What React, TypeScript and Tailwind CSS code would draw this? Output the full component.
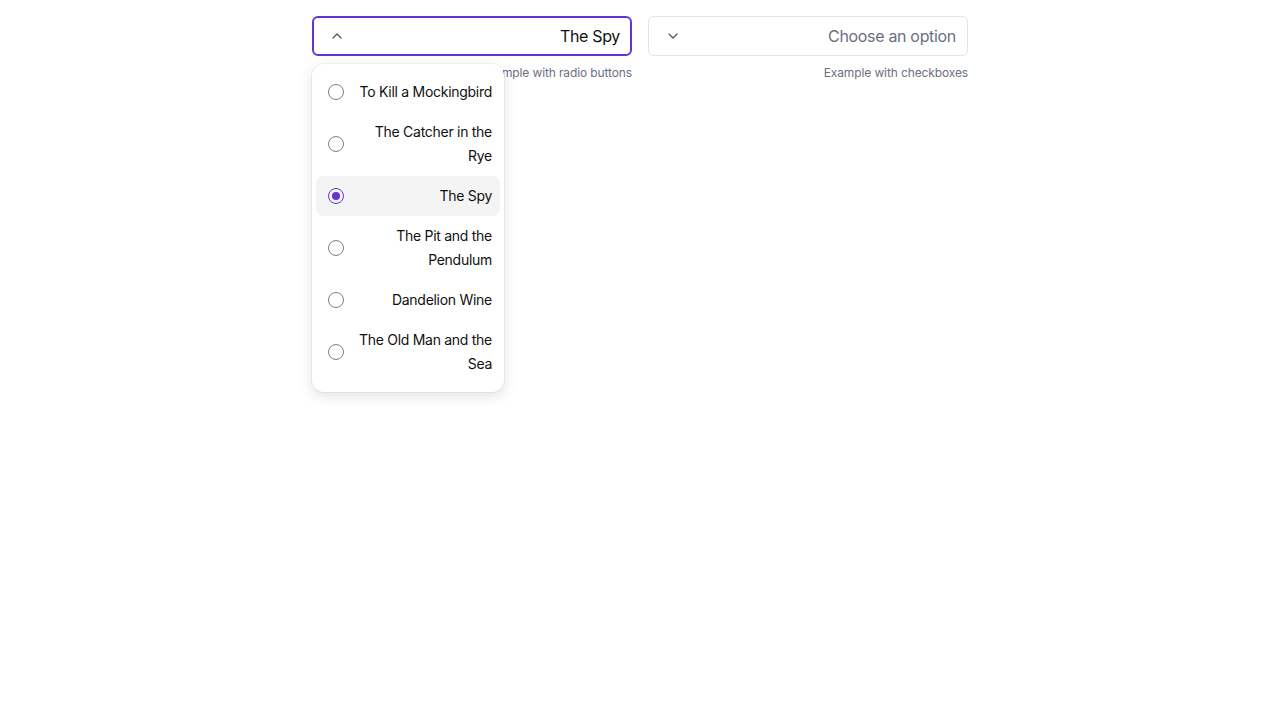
import React from "react";

const books = [
  "To Kill a Mockingbird",
  "The Catcher in the Rye",
  "The Spy",
  "The Pit and the Pendulum",
  "Dandelion Wine",
  "The Old Man and the Sea",
];

function Chevron({ up }: { up?: boolean }) {
  return (
    <svg width="10" height="6" viewBox="0 0 10 6" fill="none" className="shrink-0">
      <path
        d={up ? "M1 5 L5 1 L9 5" : "M1 1 L5 5 L9 1"}
        stroke="#52525b"
        strokeWidth="1.2"
        strokeLinecap="round"
        strokeLinejoin="round"
      />
    </svg>
  );
}

export default function App() {
  return (
    <div
      className="w-full min-h-[720px] bg-white flex justify-center pt-4"
      style={{ fontFamily: "Inter, 'Noto Sans', sans-serif" }}
    >
      <div className="flex gap-4">
        <div className="relative w-[320px] flex flex-col">
          <div className="h-10 rounded-md border-2 border-[#6035d4] flex items-center justify-between pl-[18px] pr-[10px]">
            <Chevron up />
            <span className="text-[16px] tracking-[-0.02em] text-[#111111]">The Spy</span>
          </div>
          <div className="mt-[9px] text-right text-[12px] leading-4 tracking-[-0.01em] text-[#6b6f80]">
            Example with radio buttons
          </div>
          <div className="absolute left-0 top-[48px] w-[192px] bg-white rounded-xl shadow-[0_4px_14px_rgba(0,0,0,0.12),0_0_0_1px_rgba(0,0,0,0.04)] px-1 py-2">
            {books.map((b) => {
              const sel = b === "The Spy";
              return (
                <div
                  key={b}
                  className={`flex items-center gap-3 pl-3 pr-2 py-2 rounded-lg ${sel ? "bg-[#f4f4f5]" : ""}`}
                >
                  {sel ? (
                    <span className="w-4 h-4 rounded-full border-[1.5px] border-[#6035d4] flex items-center justify-center shrink-0">
                      <span className="w-2 h-2 rounded-full bg-[#6035d4]" />
                    </span>
                  ) : (
                    <span className="w-4 h-4 rounded-full border-[1.2px] border-[#7a7d8c] shrink-0" />
                  )}
                  <span className="flex-1 text-right text-[14px] leading-6 tracking-[-0.02em] text-[#111111]">{b}</span>
                </div>
              );
            })}
          </div>
        </div>
        <div className="w-[320px] flex flex-col">
          <div className="h-10 rounded-md border border-[#e4e4e7] flex items-center justify-between pl-[19px] pr-[11px]">
            <Chevron />
            <span className="text-[16px] tracking-[-0.02em] text-[#6b6f80]">Choose an option</span>
          </div>
          <div className="mt-[9px] text-right text-[12px] leading-4 tracking-[-0.01em] text-[#6b6f80]">
            Example with checkboxes
          </div>
        </div>
      </div>
    </div>
  );
}
